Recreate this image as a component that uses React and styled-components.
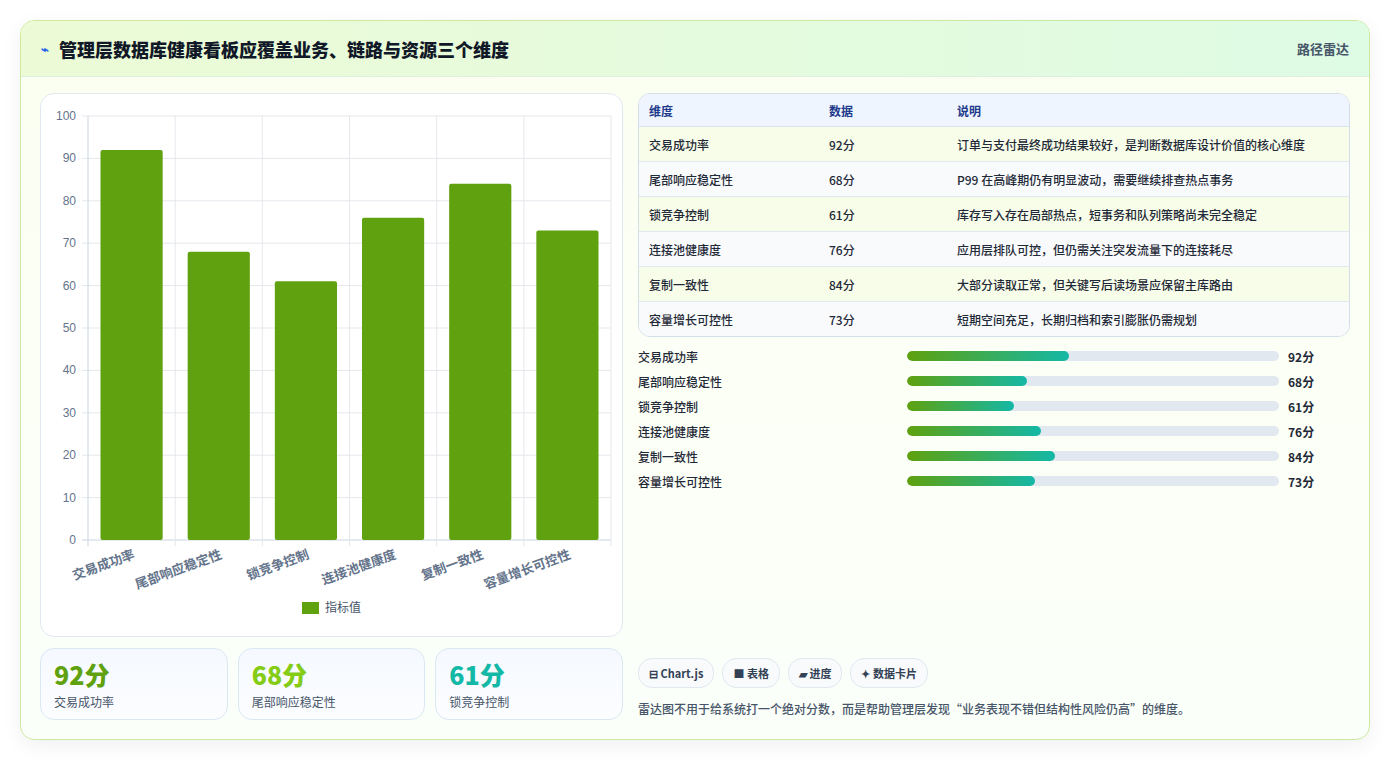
import React from "react";
import styled, { createGlobalStyle } from "styled-components";

const data = [
  { name: "交易成功率", v: 92, note: "订单与支付最终成功结果较好，是判断数据库设计价值的核心维度" },
  { name: "尾部响应稳定性", v: 68, note: "P99 在高峰期仍有明显波动，需要继续排查热点事务" },
  { name: "锁竞争控制", v: 61, note: "库存写入存在局部热点，短事务和队列策略尚未完全稳定" },
  { name: "连接池健康度", v: 76, note: "应用层排队可控，但仍需关注突发流量下的连接耗尽" },
  { name: "复制一致性", v: 84, note: "大部分读取正常，但关键写后读场景应保留主库路由" },
  { name: "容量增长可控性", v: 73, note: "短期空间充足，长期归档和索引膨胀仍需规划" },
];

const Global = createGlobalStyle`
  body { margin:0; background:#fff; font-family:"Noto Sans CJK SC","Noto Sans",sans-serif; }
`;

export default function App() {
  return (
    <Page>
      <Global />
      <Card>
        <Header>
          <Title><Bolt>⌁</Bolt>管理层数据库健康看板应覆盖业务、链路与资源三个维度</Title>
          <Tag>路径雷达</Tag>
        </Header>
        <Body>
          <Left>
            <ChartCard><BarChart /></ChartCard>
            <Stats>
              {[["92分", "交易成功率", "#5fa10e"], ["68分", "尾部响应稳定性", "#84cc16"], ["61分", "锁竞争控制", "#14b8a6"]].map(([n, l, c]) => (
                <Stat key={l}>
                  <StatNum $c={c}>{n}</StatNum>
                  <StatLabel>{l}</StatLabel>
                </Stat>
              ))}
            </Stats>
          </Left>
          <Right>
            <TableWrap>
              <Table>
                <thead>
                  <tr><Th style={{ width: 160 }}>维度</Th><Th style={{ width: 108 }}>数据</Th><Th>说明</Th></tr>
                </thead>
                <tbody>
                  {data.map((d, i) => (
                    <Tr key={d.name} $odd={i % 2 === 0}>
                      <Td>{d.name}</Td><Td>{d.v}分</Td><Td>{d.note}</Td>
                    </Tr>
                  ))}
                </tbody>
              </Table>
            </TableWrap>
            <Bars>
              {data.map((d) => (
                <BarRow key={d.name}>
                  <BarLabel>{d.name}</BarLabel>
                  <Track><Fill style={{ width: `${d.v * 0.473}%` }} /></Track>
                  <BarVal>{d.v}分</BarVal>
                </BarRow>
              ))}
            </Bars>
            <Spacer />
            <Chips>
              <Chip>⊟ Chart.js</Chip>
              <Chip>■ 表格</Chip>
              <Chip>▰ 进度</Chip>
              <Chip>✦ 数据卡片</Chip>
            </Chips>
            <Note>雷达图不用于给系统打一个绝对分数，而是帮助管理层发现“业务表现不错但结构性风险仍高”的维度。</Note>
          </Right>
        </Body>
      </Card>
    </Page>
  );
}

function BarChart() {
  const x0 = 47, x1 = 570, y0 = 22, y1 = 446, cw = (x1 - x0) / 6;
  const y = (v) => y1 - ((y1 - y0) * v) / 100;
  return (
    <svg width="582" height="542" style={{ display: "block" }}>
      {[0, 10, 20, 30, 40, 50, 60, 70, 80, 90, 100].map((t) => (
        <g key={t}>
          <line x1={x0 - 6} x2={x1} y1={y(t)} y2={y(t)} stroke={t === 0 ? "#cbd5e1" : "#e5e7eb"} />
          <text x={x0 - 12} y={y(t) + 4} textAnchor="end" fontSize="12" fill="#64748b" fontFamily="Liberation Sans, sans-serif">{t}</text>
        </g>
      ))}
      {[0, 1, 2, 3, 4, 5, 6].map((i) => (
        <line key={i} x1={x0 + i * cw} x2={x0 + i * cw} y1={y0} y2={y1 + 6} stroke={i === 0 ? "#cbd5e1" : "#e5e7eb"} />
      ))}
      {data.map((d, i) => (
        <rect key={d.name} x={x0 + i * cw + 12.5} y={y(d.v)} width={cw - 25} height={y1 - y(d.v)} fill="#5fa10e" rx="2" />
      ))}
      {data.map((d, i) => (
        <text key={d.name} transform={`translate(${x0 + i * cw + cw / 2 + 4},${y1 + 18}) rotate(-20)`} textAnchor="end" fontSize="13" fontWeight="600" fill="#64748b">{d.name}</text>
      ))}
      <rect x="261" y="508" width="17" height="12" fill="#5fa10e" />
      <text x="284" y="518" fontSize="12" fill="#475569">指标值</text>
    </svg>
  );
}

const Page = styled.div`padding:20px; width:1350px;`;
const Card = styled.div`
  border:1px solid #cde9a0; border-radius:14px; overflow:hidden; height:718px;
  background:linear-gradient(180deg,#fbfff1,#fbfffa); box-shadow:0 6px 20px rgba(0,0,0,.06);
  display:flex; flex-direction:column;
`;
const Header = styled.div`
  height:55px; display:flex; align-items:center; justify-content:space-between; padding:0 20px;
  background:linear-gradient(90deg,#ecfbd6,#defbe4); border-bottom:1px solid #dfeede;
`;
const Title = styled.h1`margin:0; font-size:18px; font-weight:800; color:#111827; display:flex; align-items:center; gap:10px;`;
const Bolt = styled.span`color:#2563eb; font-size:13px;`;
const Tag = styled.span`font-size:13px; color:#475569; font-weight:600;`;
const Body = styled.div`flex:1; display:flex; gap:15px; padding:16px 19px 18px 19px;`;
const Left = styled.div`width:583px; display:flex; flex-direction:column; gap:11px;`;
const ChartCard = styled.div`height:542px; border:1px solid #e2e8f0; border-radius:14px; background:#fff; overflow:hidden;`;
const Stats = styled.div`display:grid; grid-template-columns:repeat(3,1fr); gap:10px;`;
const Stat = styled.div`height:72px; box-sizing:border-box; border:1px solid #dbe7f3; border-radius:14px; background:linear-gradient(180deg,#f5f9ff,#fcfdff); padding:9px 13px;`;
const StatNum = styled.div`font-size:25px; font-weight:800; color:${(p) => p.$c}; line-height:1.3;`;
const StatLabel = styled.div`font-size:12px; color:#475569; margin-top:2px;`;
const Right = styled.div`flex:1; display:flex; flex-direction:column;`;
const TableWrap = styled.div`border:1px solid #d4dee9; border-radius:12px; overflow:hidden; background:#fff;`;
const Table = styled.table`width:100%; border-collapse:collapse; font-size:12px;`;
const Th = styled.th`text-align:left; height:32px; padding:0 10px; background:#eef5ff; color:#1e3a8a; font-weight:700; border-bottom:1px solid #dbe3ee;`;
const Tr = styled.tr`background:${(p) => (p.$odd ? "#f7fde9" : "#f8fafc")};`;
const Td = styled.td`height:34px; padding:0 10px; color:#1f2937; font-weight:500; border-top:1px solid #e2e8f0;`;
const Bars = styled.div`display:flex; flex-direction:column; gap:7px; margin-top:10px;`;
const BarRow = styled.div`display:grid; grid-template-columns:260px 372px auto; align-items:center; gap:9px; height:18px; font-size:12px;`;
const BarLabel = styled.span`color:#1f2937; font-weight:500;`;
const Track = styled.div`height:10px; border-radius:5px; background:#e2e8f0; overflow:hidden;`;
const Fill = styled.div`height:100%; border-radius:5px; background:linear-gradient(90deg,#5fa10e,#14b8a6);`;
const BarVal = styled.span`font-weight:700; color:#1f2937;`;
const Spacer = styled.div`flex:1;`;
const Chips = styled.div`display:flex; gap:8px;`;
const Chip = styled.span`
  font-size:11px; font-weight:700; color:#334155; padding:6px 10px; border-radius:14px;
  border:1px solid #e2e8f0; background:#f8fafc;
`;
const Note = styled.p`margin:12px 0 4px; font-size:12px; font-weight:500; color:#475569;`;
